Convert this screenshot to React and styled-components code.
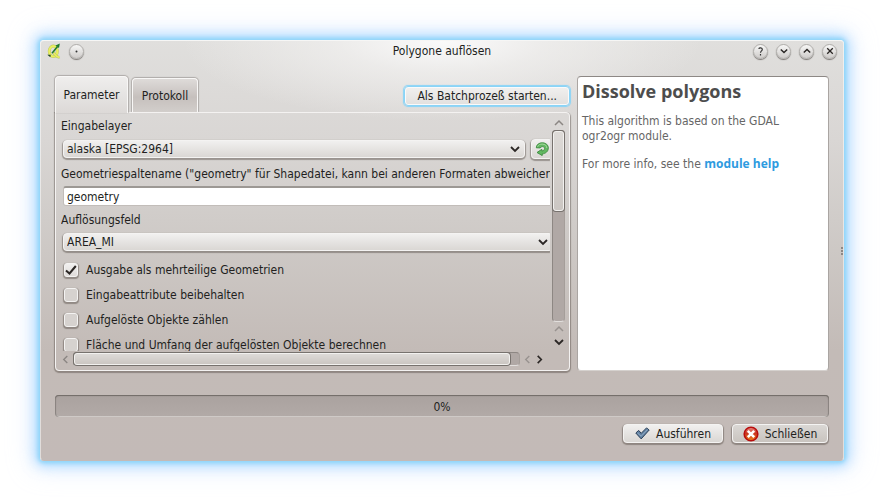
import React, { useState } from "react";
import styled, { createGlobalStyle, css } from "styled-components";

const GlobalStyle = createGlobalStyle`
  * { box-sizing: border-box; }
  body { margin: 0; background: #fff; }
  body, button, input, select {
    font-family: "DejaVu Sans Condensed", "Open Sans", sans-serif;
    font-size: 12px;
    line-height: 16px;
    color: #221f1e;
  }
`;

const raised = css`
  border: 1px solid #f4f3f2;
  border-radius: 4px;
  background: linear-gradient(#f1f0ef, #dad7d4);
  box-shadow: 0 1px 1px 1px rgba(80, 70, 65, 0.45);
`;

const Desktop = styled.div`
  display: flex;
  min-height: 100vh;
  padding: 40px 40px 41px;
`;

const Window = styled.main`
  position: relative;
  flex: 1;
  min-width: 0;
  display: flex;
  flex-direction: column;
  border: 1px solid rgba(255, 255, 255, 0.5);
  border-top-color: #f6f6f5;
  border-bottom-color: transparent;
  border-radius: 4px;
  background:
    radial-gradient(ellipse 260px 80px at 50% 0, #fafafa, rgba(242, 241, 240, 0.7) 40%, rgba(230, 229, 228, 0)) no-repeat,
    linear-gradient(#e0dfdd, #d9d6d4 100px, #d0ccc9 180px, #c3bbb7 310px, #c3bab7) border-box;
  box-shadow: 0 0 4px 2px #8ad4f8, 0 0 13px 5px rgba(130, 200, 255, 0.6), 0 0 24px 9px rgba(190, 215, 255, 0.35);
`;

const TitleBar = styled.header`
  display: grid;
  grid-template-columns: 1fr auto 1fr;
  align-items: center;
  height: 20px;
  padding: 0 6px;
`;

const Title = styled.h1`
  margin: 0;
  font-size: 12px;
  font-weight: 400;
`;

const TitleGroup = styled.div`
  display: flex;
  align-items: center;
  gap: 8px;
  justify-content: ${(p) => (p.$end ? "flex-end" : "flex-start")};
`;

const RoundButton = styled.button`
  display: grid;
  place-items: center;
  width: 15px;
  height: 15px;
  padding: 0;
  border: 1px solid #b0aeab;
  border-radius: 50%;
  background: linear-gradient(#f7f7f6, #cfccca);
  box-shadow: 0 1px 1px rgba(70, 65, 60, 0.65);
`;

const Body = styled.div`
  flex: 1;
  display: grid;
  grid-template-columns: minmax(0, 515fr) minmax(0, 252fr);
  column-gap: 7px;
  padding: 15px 14px 0;
`;

const Left = styled.section`
  display: flex;
  flex-direction: column;
`;

const TabBar = styled.div`
  display: flex;
  align-items: flex-end;
  justify-content: space-between;
  height: 36px;
`;

const Tabs = styled.div`
  display: flex;
  align-items: flex-end;
  gap: 4px;
`;

const Tab = styled.button`
  position: relative;
  z-index: ${(p) => (p.$active ? 1 : 0)};
  width: ${(p) => (p.$active ? "73px" : "66px")};
  height: ${(p) => (p.$active ? "37px" : "34px")};
  margin-bottom: ${(p) => (p.$active ? "-1px" : "0")};
  padding: 0;
  white-space: nowrap;
  border: 1px solid #f8f7f6;
  border-bottom: 0;
  border-radius: 4px 4px 0 0;
  background: ${(p) =>
    p.$active ? "linear-gradient(#efeeed, #dcd9d7)" : "linear-gradient(#dedbd9, #c6c0bd 55%, #d2cecb)"};
  box-shadow: 0 -1px 1px rgba(90, 80, 75, 0.3), 1px 0 1px rgba(90, 80, 75, 0.3), -1px 0 1px rgba(90, 80, 75, 0.3);
`;

const BatchButton = styled.button`
  height: 20px;
  margin-bottom: 6px;
  padding: 0 12px;
  white-space: nowrap;
  border: 1px solid #8ad4f7;
  border-radius: 4px;
  background: linear-gradient(#f1f0ef, #e2e0de);
  box-shadow: inset 0 0 0 1px #fafafa, 0 0 1px 1px #8ad4f7;
`;

const Panel = styled.div`
  flex: 1;
  display: grid;
  grid-template-columns: minmax(0, 1fr) 13px;
  grid-template-rows: 238px 14px;
  column-gap: 2px;
  row-gap: 1px;
  padding: 0 4px 4px 5px;
  border: 1px solid #f4f2f1;
  border-radius: 0 4px 4px 4px;
  box-shadow: 0 1px 1px 1px rgba(80, 70, 65, 0.45);
  clip-path: inset(0 -3px -3px -3px);
`;

const Viewport = styled.div`
  overflow: hidden;
`;

const Form = styled.form`
  display: flex;
  flex-direction: column;
  gap: 5px;
  width: calc(100% + 4px);
  padding-top: 4px;
`;

const Label = styled.label`
  height: 16px;
  line-height: 18px;
  white-space: nowrap;
`;

const FieldRow = styled.div`
  display: flex;
  align-items: center;
  gap: 6px;
  padding: 0 1px 0 2px;
`;

const SelectBox = styled.div`
  flex: 1;
  display: grid;
  grid-template-columns: 1fr 20px;
  align-items: center;

  svg { grid-area: 1 / 2; pointer-events: none; justify-self: center; }
`;

const Select = styled.select`
  grid-area: 1 / 1 / 2 / 3;
  appearance: none;
  ${raised}
  height: 18px;
  margin: 1px 0;
  padding: 0 3px;
  line-height: 14px;
`;

const RefreshButton = styled.button`
  ${raised}
  display: grid;
  place-items: center;
  width: 22px;
  height: 20px;
  margin: 1px 0;
  padding: 0;
`;

const TextInput = styled.input`
  flex: 1;
  height: 20px;
  padding: 0 3px;
  border: 1px solid #c2bdb9;
  border-top: 2px solid #9c9894;
  border-radius: 3px;
  background: #fff;
`;

const Checks = styled.div`
  display: flex;
  flex-direction: column;
`;

const CheckLabel = styled.label`
  display: flex;
  align-items: center;
  gap: 7px;
  height: 25px;
  padding-left: 2px;
  white-space: nowrap;
`;

const CheckSlot = styled.span`
  display: grid;
  place-items: center;
  svg { grid-area: 1 / 1; pointer-events: none; }
`;

const CheckInput = styled.input`
  grid-area: 1 / 1;
  appearance: none;
  ${raised}
  background: ${(p) => (p.checked ? "linear-gradient(#f1f0ef, #dfdcda)" : "#d6d2cf")};
  width: 14px;
  height: 14px;
  margin: 0 1px;
  border-radius: 3px;
`;

const ScrollColumn = styled.div`
  display: flex;
  flex-direction: column;
  align-items: center;
  padding: 3px 0;
`;

const ScrollRow = styled.div`
  grid-column: 1 / 3;
  display: flex;
  align-items: center;
  gap: 3px;
  padding-right: 21px;
`;

const Track = styled.div`
  flex: 1;
  display: flex;
  flex-direction: ${(p) => (p.$vertical ? "column" : "row")};
  ${(p) => (p.$vertical ? "width: 13px; margin: 1px 0 0;" : "height: 14px; min-width: 0;")}
  border: 1px solid #8d8783;
  border-right-color: #a59e9a;
  border-bottom-color: #e2dfdd;
  border-radius: 4px;
  background: #b0a8a5;
`;

const Thumb = styled.div`
  flex: 0 0 ${(p) => p.$size};
  border: 1px solid #f2f1ef;
  border-radius: 3px;
  background: linear-gradient(#dddad7, #cbc6c2);
  box-shadow: 0 0 0 1px #77726e;
`;

const ArrowButton = styled.button`
  display: grid;
  place-items: center;
  width: ${(p) => (p.$wide ? "13px" : "9px")};
  height: 13px;
  padding: 0;
  border: 0;
  background: none;
`;

const Help = styled.article`
  padding: 3px 4px;
  border: 1px solid #aaa5a2;
  border-top-color: #8d8885;
  border-bottom-color: #d5d1ce;
  border-radius: 4px;
  background: #fff;
  color: #666;
`;

const HelpTitle = styled.h2`
  margin: 0 0 12px;
  font-family: "Open Sans", sans-serif;
  font-size: 18px;
  line-height: 22px;
  font-weight: 700;
  color: #4d4d4d;
`;

const HelpText = styled.p`
  margin: 0 0 12px;
  line-height: 15px;
`;

const HelpLink = styled.a`
  color: #2e9bdf;
  font-family: "Open Sans", sans-serif;
  font-weight: 700;
  text-decoration: none;
`;

const Footer = styled.footer`
  display: flex;
  flex-direction: column;
  gap: 7px;
  padding: 24px 14px 17px;
`;

const Progress = styled.div`
  height: 22px;
  line-height: 24px;
  text-align: center;
  border-radius: 4px;
  background: linear-gradient(#aaa29f, #b2aaa7);
  box-shadow: inset 0 1px 1px #716b67, inset 1px 0 1px #8b8581, inset -1px 0 1px #8b8581, inset 0 -1px 0 #dedbd8;
`;

const Actions = styled.div`
  display: flex;
  justify-content: flex-end;
  gap: 9px;
  padding-right: 1px;
`;

const ActionButton = styled.button`
  ${raised}
  display: flex;
  align-items: center;
  justify-content: center;
  gap: 6px;
  width: ${(p) => p.$width};
  height: 19px;
  padding: 0;
  white-space: nowrap;
  ${(p) => p.$muted && "background: linear-gradient(#dad7d4, #c9c4bf);"}
`;

const ResizeGrip = styled.div`
  position: absolute;
  top: 50%;
  right: 0;
  display: grid;
  gap: 1px;
  transform: translateY(-50%);

  i { width: 2px; height: 2px; background: #8d8885; }
`;

const paths = {
  down: "M1 3 5 7 9 3",
  up: "M1 7 5 3 9 7",
  left: "M7 1 3 5 7 9",
  right: "M3 1 7 5 3 9",
  close: "M1.5 1.5 8.5 8.5M8.5 1.5 1.5 8.5",
};

function Glyph({ kind, size = 10, color = "#2b2725", weight = 1.8 }) {
  return (
    <svg width={size} height={size} viewBox="0 0 10 10" fill="none" stroke={color} strokeWidth={weight} aria-hidden="true">
      <path d={paths[kind]} />
    </svg>
  );
}

function AppIcon() {
  return (
    <svg width="14" height="16" viewBox="0 0 14 16" aria-hidden="true">
      <ellipse cx="6.3" cy="8.3" rx="4" ry="5.2" fill="none" stroke="#b9c06a" strokeWidth="3" />
      <ellipse cx="6.3" cy="8.3" rx="4" ry="5.2" fill="none" stroke="#e8ef5e" strokeWidth="2.2" />
      <path d="M6.500 10C8.500 11 9 15 12.500 14" fill="none" stroke="#b9c06a" strokeWidth="2.600" />
      <path d="M6.500 10C8.500 11 9 15 12.500 14" fill="none" stroke="#e8ef5e" strokeWidth="1.800" />
      <path d="M5 10.300 10.500 3.500" stroke="#217a2b" strokeWidth="1.600" />
      <path d="M8.500 2.600 12.800.6 12 5z" fill="#1b7a28" />
      <path d="M.3 11.800 3.800 11.700 3.400 14.300z" fill="#24482a" />
    </svg>
  );
}

function RefreshIcon() {
  return (
    <svg width="14" height="14" viewBox="0 0 14 14" aria-hidden="true">
      <path
        d="M1.300 5.800C1.500 2.500 4 .8 7.300.8c3.700 0 6 2.300 6 5.300 0 3.300-2.700 5.500-6 5.800L7.200 13.600 2 10.500 6.800 7.300 6.900 9c1.600-.2 2.700-1.200 2.700-2.500C9.600 5.200 8.600 4.600 7.300 4.600 6.200 4.600 5.600 5.100 5.200 5.900z"
        fill="#62b862"
        stroke="#3c8a3e"
        strokeWidth=".9"
      />
      <path d="M2.600 4.800C3.300 2.800 4.900 2.100 7.200 2.100c2.800 0 4.700 1.600 4.700 4" fill="none" stroke="#a6dba0" />
    </svg>
  );
}

function ApplyIcon() {
  return (
    <svg width="15" height="13" viewBox="0 0 15 13" aria-hidden="true">
      <path
        d="M.8 6 3.700 3.400 6.200 6.300 11.500.9 14.200 3 6.200 11.900z"
        fill="#6483a3"
        stroke="#2b4059"
        strokeLinejoin="round"
      />
      <path d="M2.500 6 6.200 9.200 12.500 2.600" fill="none" stroke="#8faac4" />
    </svg>
  );
}

function CancelIcon() {
  return (
    <svg width="16" height="16" viewBox="0 0 16 16" aria-hidden="true">
      <defs>
        <linearGradient id="cancelFill" x1="0" y1="0" x2="0" y2="1">
          <stop offset="0" stopColor="#ee9590" />
          <stop offset=".45" stopColor="#c9331e" />
          <stop offset="1" stopColor="#ee8a1e" />
        </linearGradient>
      </defs>
      <circle cx="8" cy="8" r="6.800" fill="url(#cancelFill)" stroke="#b80d0d" strokeWidth="1.600" />
      <path d="M4.800 4.800 11.200 11.200M11.200 4.800 4.800 11.200" stroke="#fff" strokeWidth="2.600" />
    </svg>
  );
}

const OPTIONS = [
  "Ausgabe als mehrteilige Geometrien",
  "Eingabeattribute beibehalten",
  "Aufgelöste Objekte zählen",
  "Fläche und Umfang der aufgelösten Objekte berechnen",
];

function Dropdown({ id, value }) {
  return (
    <SelectBox>
      <Select id={id} defaultValue={value}>
        <option>{value}</option>
      </Select>
      <Glyph kind="down" />
    </SelectBox>
  );
}

export default function App() {
  const [checked, setChecked] = useState([true, false, false, false]);
  const [column, setColumn] = useState("geometry");
  const toggle = (i) => setChecked(checked.map((c, n) => (n === i ? !c : c)));

  return (
    <Desktop>
      <GlobalStyle />
      <Window>
        <TitleBar>
          <TitleGroup>
            <AppIcon />
            <RoundButton aria-label="Menü">
              <svg width="3" height="3" aria-hidden="true"><circle cx="1.500" cy="1.500" r="1" fill="#333" /></svg>
            </RoundButton>
          </TitleGroup>
          <Title>Polygone auflösen</Title>
          <TitleGroup $end>
            <RoundButton aria-label="Hilfe">
              <svg width="9" height="9" viewBox="0 0 9 9" fill="none" stroke="#333" strokeWidth="1.200" aria-hidden="true">
                <path d="M2.700 1.900C3.300.4 6.400.5 6.300 2.500 6.200 3.900 4.500 3.900 4.500 5.800M4.500 7v1.500" />
              </svg>
            </RoundButton>
            <RoundButton aria-label="Minimieren"><Glyph kind="down" size={8} /></RoundButton>
            <RoundButton aria-label="Maximieren"><Glyph kind="up" size={8} /></RoundButton>
            <RoundButton aria-label="Fenster schließen"><Glyph kind="close" size={8} weight={1.6} /></RoundButton>
          </TitleGroup>
        </TitleBar>

        <Body>
          <Left>
            <TabBar>
              <Tabs role="tablist">
                <Tab role="tab" aria-selected="true" $active>Parameter</Tab>
                <Tab role="tab" aria-selected="false">Protokoll</Tab>
              </Tabs>
              <BatchButton>Als Batchprozeß starten...</BatchButton>
            </TabBar>
            <Panel role="tabpanel">
              <Viewport>
                <Form>
                  <Label htmlFor="layer">Eingabelayer</Label>
                  <FieldRow>
                    <Dropdown id="layer" value="alaska [EPSG:2964]" />
                    <RefreshButton type="button" aria-label="Aktualisieren"><RefreshIcon /></RefreshButton>
                  </FieldRow>
                  <Label htmlFor="column">
                    Geometriespaltename ("geometry" für Shapedatei, kann bei anderen Formaten abweichen
                  </Label>
                  <FieldRow>
                    <TextInput id="column" value={column} onChange={(e) => setColumn(e.target.value)} />
                  </FieldRow>
                  <Label htmlFor="field">Auflösungsfeld</Label>
                  <FieldRow>
                    <Dropdown id="field" value="AREA_MI" />
                  </FieldRow>
                  <Checks>
                    {OPTIONS.map((text, i) => (
                      <CheckLabel key={text}>
                        <CheckSlot>
                          <CheckInput type="checkbox" checked={checked[i]} onChange={() => toggle(i)} />
                          {checked[i] && (
                            <svg width="12" height="12" viewBox="0 0 12 12" fill="none" stroke="#2b2725" strokeWidth="2" aria-hidden="true">
                              <path d="M1 6.500 4.500 9.500 10.800 2" />
                            </svg>
                          )}
                        </CheckSlot>
                        {text}
                      </CheckLabel>
                    ))}
                  </Checks>
                </Form>
              </Viewport>
              <ScrollColumn>
                <ArrowButton $wide aria-label="Nach oben"><Glyph kind="up" color="#8b8683" weight={1.5} /></ArrowButton>
                <Track $vertical><Thumb $size="42%" /></Track>
                <ArrowButton $wide aria-label="Seite nach oben"><Glyph kind="up" color="#98928f" weight={1.5} /></ArrowButton>
                <ArrowButton $wide aria-label="Nach unten"><Glyph kind="down" /></ArrowButton>
              </ScrollColumn>
              <ScrollRow>
                <ArrowButton aria-label="Nach links"><Glyph kind="left" size={9} color="#8b8683" weight={1.5} /></ArrowButton>
                <Track><Thumb $size="98%" /></Track>
                <ArrowButton aria-label="Seite nach links"><Glyph kind="left" size={9} color="#98928f" weight={1.5} /></ArrowButton>
                <ArrowButton aria-label="Nach rechts"><Glyph kind="right" size={9} /></ArrowButton>
              </ScrollRow>
            </Panel>
          </Left>
          <Help>
            <HelpTitle>Dissolve polygons</HelpTitle>
            <HelpText>This algorithm is based on the GDAL ogr2ogr module.</HelpText>
            <HelpText>For more info, see the <HelpLink href="#help">module help</HelpLink></HelpText>
          </Help>
        </Body>

        <Footer>
          <Progress role="progressbar" aria-valuenow={0} aria-valuemin={0} aria-valuemax={100}>0%</Progress>
          <Actions>
            <ActionButton $width="100px"><ApplyIcon />Ausführen</ActionButton>
            <ActionButton $width="96px" $muted><CancelIcon />Schließen</ActionButton>
          </Actions>
        </Footer>
        <ResizeGrip aria-hidden="true"><i /><i /><i /></ResizeGrip>
      </Window>
    </Desktop>
  );
}
